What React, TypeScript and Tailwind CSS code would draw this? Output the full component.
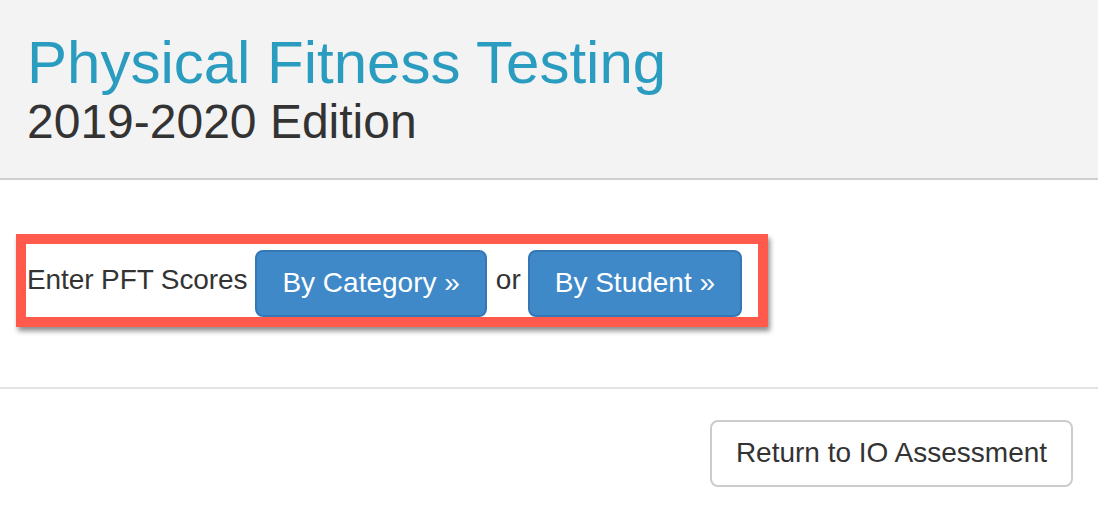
export default function App() {
  return (
    <div className="min-h-screen bg-white text-[#333] font-['Liberation_Sans',Arial,sans-serif]">
      {/* header */}
      <div className="bg-[#f3f3f3] border-b-2 border-[#cfcfcf] pl-[27px] pt-[30px] pb-[29px]">
        <h1 className="text-[60px] leading-[1.1] text-[#2a9cc0] font-normal">Physical Fitness Testing</h1>
        <h2 className="text-[48px] leading-[1.1] text-[#333] font-normal">2019-2020 Edition</h2>
      </div>

      {/* score entry */}
      <div className="pt-[54px] pb-[60px] pl-[16px] border-b-2 border-[#e3e3e3]">
        <div className="inline-flex items-center border-[10px] border-[#ff5a4c] bg-white pt-[6px] pl-[1px] pr-[16px] shadow-[2px_4px_5px_rgba(0,0,0,0.45)]">
          <span className="text-[28px] leading-none pb-[6px] tracking-[-0.1px]">Enter PFT Scores</span>
          <button className="ml-[8px] h-[67px] px-[25px] rounded-[8px] bg-[#3f89c9] border-2 border-[#3576b5] text-white text-[28px] leading-none">
            By Category »
          </button>
          <span className="text-[28px] leading-none pb-[6px] ml-[9px] mr-[7px]">or</span>
          <button className="h-[67px] px-[25px] rounded-[8px] bg-[#3f89c9] border-2 border-[#3576b5] text-white text-[28px] leading-none">
            By Student »
          </button>
        </div>
      </div>

      {/* footer */}
      <div className="flex justify-end pt-[31px] pr-[25px]">
        <button className="h-[67px] w-[363px] rounded-[8px] border-2 border-[#cccccc] bg-white text-[28px] leading-none text-[#333]">
          Return to IO Assessment
        </button>
      </div>
    </div>
  );
}
